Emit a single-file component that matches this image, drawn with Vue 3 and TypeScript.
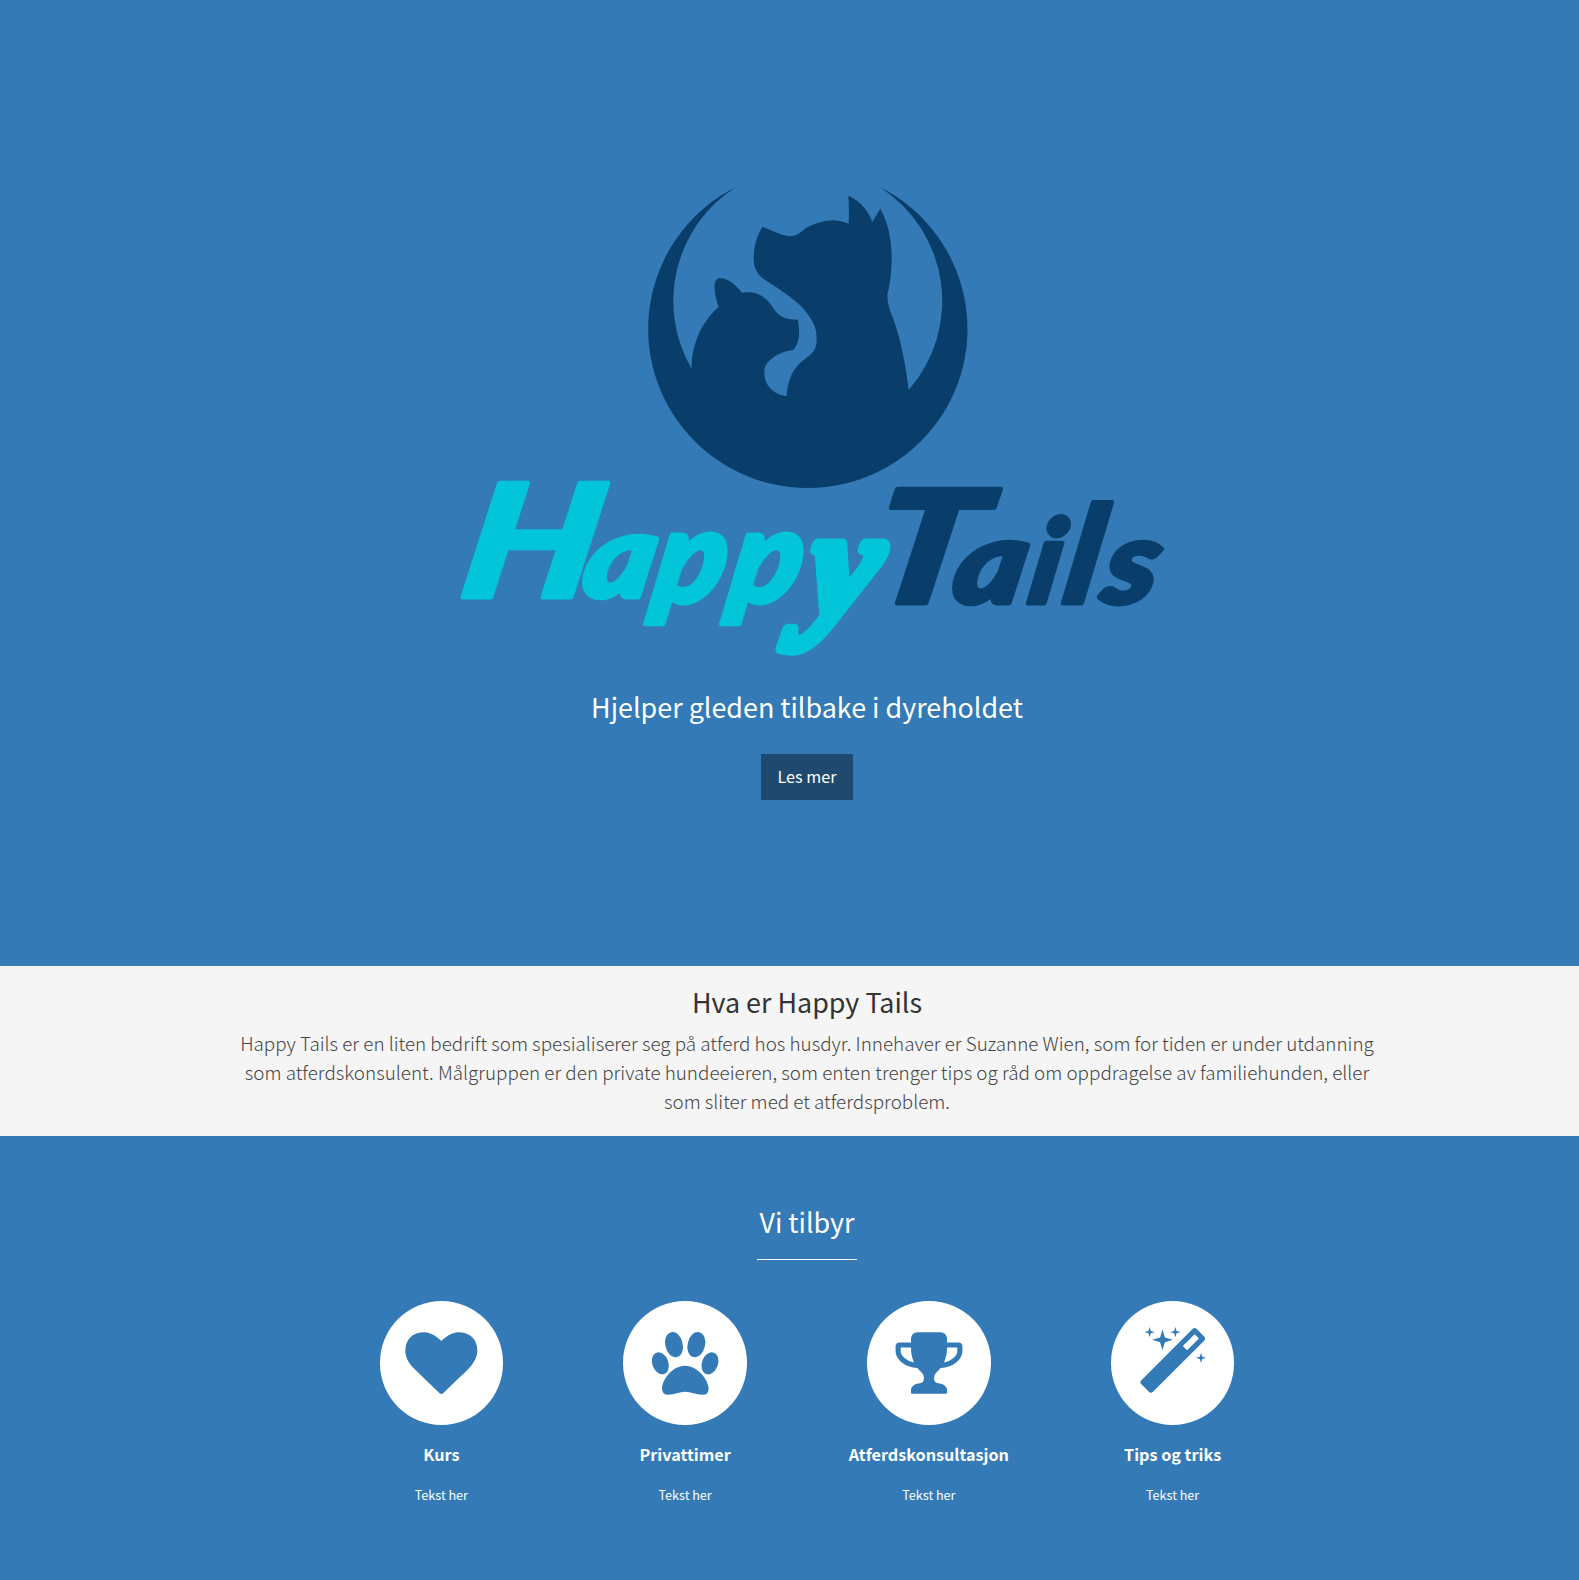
<script setup lang="ts">
interface Offer {
  title: string
  text: string
  viewBox: string
  icon: string
}

const offers: Offer[] = [
  {
    title: 'Kurs',
    text: 'Tekst her',
    viewBox: '-8 -4 1792 1792',
    icon: 'M896 1664q-26 0-44-18l-624-602q-10-8-27.5-26t-55.5-65.5-68-97.5-53.5-121-23.5-138q0-220 127-344t351-124q62 0 126.5 21.5t120 58 95.5 68.5 76 68q36-36 76-68t95.5-68.5 120-58 126.5-21.5q224 0 351 124t127 344q0 221-229 450l-623 600q-18 18-44 18z',
  },
  {
    title: 'Privattimer',
    text: 'Tekst her',
    viewBox: '837 109 216 216',
    icon: 'M886.7 167.8A26 36 -13 1 1 937.3 156.2A26 36 -13 1 1 886.7 167.8ZM953.7 156.2A26 36 13 1 1 1004.3 167.8A26 36 13 1 1 953.7 156.2ZM848.4 226.2A24 34 -20 1 1 893.6 209.8A24 34 -20 1 1 848.4 226.2ZM997.4 209.8A24 34 20 1 1 1042.6 226.2A24 34 20 1 1 997.4 209.8ZM945 225C985 225 1016 270 1016 294Q1016 312 998 312C978 312 962 303 945 303C930 303 912 312 895 312Q876 312 876 294C876 268 907 225 945 225Z',
  },
  {
    title: 'Atferdskonsultasjon',
    text: 'Tekst her',
    viewBox: '0 0 1792 1792',
    icon: 'M522 883q-74-162-74-371h-256v96q0 78 94.5 162t235.5 113zm1078-275v-96h-256q0 209-74 371 141-29 235.5-113t94.5-162zm128-128v128q0 71-41.5 143t-112 130-173 97.5-215.5 44.5q-42 54-95 95-38 34-52.5 72.5t-14.5 89.5q0 54 30.5 91t97.5 37q75 0 133.5 45.5t58.5 114.5v64q0 14-9 23t-23 9h-832q-14 0-23-9t-9-23v-64q0-69 58.5-114.5t133.5-45.5q67 0 97.5-37t30.5-91q0-51-14.5-89.5t-52.5-72.5q-53-41-95-95-113-5-215.5-44.5t-173-97.5-112-130-41.5-143v-128q0-40 28-68t68-28h288v-96q0-66 47-113t113-47h576q66 0 113 47t47 113v96h288q40 0 68 28t28 68z',
  },
  {
    title: 'Tips og triks',
    text: 'Tekst her',
    viewBox: '6 0 1792 1792',
    icon: 'M1254 581l293-293-107-107-293 293zm447-293q0 27-18 45l-1286 1286q-18 18-45 18t-45-18l-198-198q-18-18-18-45t18-45l1286-1286q18-18 45-18t45 18l198 198q18 18 18 45zm-1351-190l98 30-98 30-30 98-30-98-98-30 98-30 30-98zm350 162l196 60-196 60-60 196-60-196-196-60 196-60 60-196zm930 478l98 30-98 30-30 98-30-98-98-30 98-30 30-98zm-640-640l98 30-98 30-30 98-30-98-98-30 98-30 30-98z',
  },
]
</script>

<template>
  <main class="page">
    <header class="hero">
      <svg class="logo" viewBox="455 187 706 467" role="img" aria-label="Happy Tails">
        <path
          class="navy"
          transform="translate(640 180) scale(.33333)"
          d="M288 21A479 477 0 1 0 719 21A405 405 0 0 1 806 630C796 540 776 450 748 386Q742 362 742 345C760 270 765 165 721 86L697 126C688 95 658 60 625 47Q628 80 626 131C605 124 590 121 578 121C556 121 520 132 502 142C485 152 475 168 455 168C430 168 410 158 368 140C345 175 341 210 341 240Q342 275 368 295C420 330 480 365 507 408C528 438 530 455 530 480C530 550 452 518 440 648C405 646 373 618 373 580Q373 562 378 554C398 525 435 512 460 510C479 485 480 460 474 419C440 419 418 414 400 385C382 354 355 332 306 338C285 312 262 294 238 294C216 298 222 340 236 380C180 430 154 500 155 567A405 405 0 0 1 288 21Z"
        />
        <text class="word cyan" transform="translate(455 597) skewX(-10)">
          <tspan class="cap" x="2" textLength="134" lengthAdjust="spacingAndGlyphs">H</tspan><tspan x="125" textLength="70" lengthAdjust="spacingAndGlyphs">a</tspan><tspan class="bowl" x="196 272" y="5">pp</tspan><tspan class="tail" x="351" y="19">y</tspan>
        </text>
        <text class="word navy" transform="translate(885 603) skewX(-10)">
          <tspan class="cap" x="-20" textLength="108" lengthAdjust="spacingAndGlyphs">T</tspan><tspan x="65" textLength="71" lengthAdjust="spacingAndGlyphs">a</tspan><tspan x="141">i</tspan><tspan class="tall" x="176">l</tspan><tspan x="215" textLength="53" lengthAdjust="spacingAndGlyphs">s</tspan>
        </text>
      </svg>
      <p class="tagline">Hjelper gleden tilbake i dyreholdet</p>
      <a class="button">Les mer</a>
    </header>

    <section class="about">
      <h2>Hva er Happy Tails</h2>
      <p>
        Happy Tails er en liten bedrift som spesialiserer seg på atferd hos husdyr. Innehaver er Suzanne Wien, som for tiden er under utdanning<br />
        som atferdskonsulent. Målgruppen er den private hundeeieren, som enten trenger tips og råd om oppdragelse av familiehunden, eller<br />
        som sliter med et atferdsproblem.
      </p>
    </section>

    <section class="offers">
      <h2>Vi tilbyr</h2>
      <hr />
      <div class="row">
        <article v-for="offer in offers" :key="offer.title" class="offer">
          <span class="disc">
            <svg :viewBox="offer.viewBox"><path :d="offer.icon" /></svg>
          </span>
          <h4>{{ offer.title }}</h4>
          <p>{{ offer.text }}</p>
        </article>
      </div>
    </section>
  </main>
</template>

<style>
body {
  margin: 0;
  background: #337ab7;
}
</style>

<style scoped>
.page {
  width: 1579px;
  height: 1580px;
  overflow: hidden;
  background: #337ab7;
  color: #fff;
  font-family: "Source Sans Pro", "Noto Sans CJK SC", "Noto Sans", sans-serif;
  text-align: center;
}
.page * {
  box-sizing: border-box;
}
h2,
h4,
p {
  margin: 0;
}
h2,
.tagline {
  font-size: 26.9px;
  line-height: 33px;
  font-weight: 400;
}
.hero {
  height: 966px;
  padding: 187px 0 0 35px;
  display: flex;
  flex-direction: column;
  align-items: center;
}
.logo {
  width: 706px;
  height: 467px;
  margin-left: 2px;
  overflow: visible;
}
.navy {
  fill: #093e6b;
  stroke: #093e6b;
}
.cyan {
  fill: #02c5da;
  stroke: #02c5da;
}
path.navy {
  stroke: none;
}
.word {
  font-family: Lato, sans-serif;
  font-weight: 900;
  font-style: italic;
  font-size: 116px;
  stroke-width: 5px;
  stroke-linejoin: round;
}
.cap {
  font-size: 157px;
}
.bowl {
  font-size: 130px;
}
.tail {
  font-family: "Liberation Serif", serif;
  font-weight: 700;
  font-size: 156px;
  stroke-width: 12px;
}
.tall {
  font-size: 135px;
}
.tagline {
  margin-top: 36px;
}
.button {
  width: 92px;
  height: 46px;
  margin-top: 31px;
  background: #20496f;
  font-size: 16.2px;
  line-height: 44px;
}
.about {
  height: 170px;
  padding: 19px 0 0 35px;
  background: #f5f5f5;
  color: #333;
}
.about p {
  margin-top: 10px;
  font-size: 18.84px;
  line-height: 29px;
  font-weight: 300;
  color: #444;
  white-space: nowrap;
}
.offers {
  padding: 69px 0 0 35px;
}
hr {
  width: 100px;
  height: 1px;
  margin: 21px auto 41px;
  border: 0;
  background: #fff;
}
.row {
  width: 975px;
  margin: 0 auto;
  display: flex;
}
.offer {
  flex: 1;
  display: flex;
  flex-direction: column;
  align-items: center;
}
.disc {
  width: 123.5px;
  height: 123.5px;
  border-radius: 50%;
  background: #fff;
  display: flex;
  align-items: center;
  justify-content: center;
}
.disc svg {
  width: 72px;
  height: 72px;
  fill: #337ab7;
  overflow: visible;
}
.offer h4 {
  margin-top: 19.5px;
  font-size: 16.2px;
  line-height: 20px;
  font-weight: 700;
}
.offer p {
  margin-top: 21px;
  font-size: 12.6px;
  line-height: 20px;
}
</style>
